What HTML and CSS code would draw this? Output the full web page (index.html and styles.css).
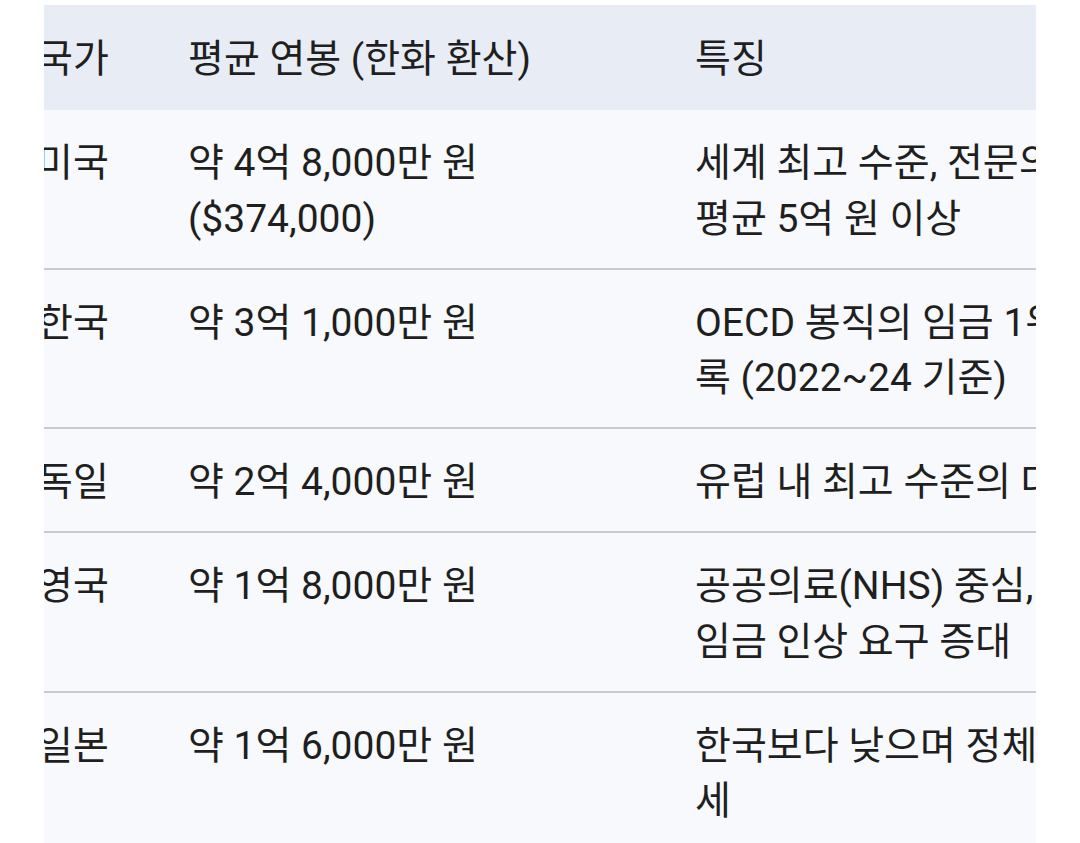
FILE: index.html
```html
<!DOCTYPE html>
<html lang="ko">
<head>
<meta charset="utf-8">
<title>국가별 의사 평균 연봉</title>
<link rel="stylesheet" href="styles.css">
</head>
<body>
<div class="scroller">
  <table class="salary">
    <thead>
      <tr>
        <th class="c-country">국가</th>
        <th class="c-pay">평균 연봉 (한화 환산)</th>
        <th class="c-note">특징</th>
      </tr>
    </thead>
    <tbody>
      <tr>
        <td>미국</td>
        <td>약 4억 8,000만 원 ($374,000)</td>
        <td>세계 최고 수준, 전문의는 평균 5억 원 이상</td>
      </tr>
      <tr>
        <td>한국</td>
        <td>약 3억 1,000만 원</td>
        <td>OECD 봉직의 임금 1위 기록 (2022~24 기준)</td>
      </tr>
      <tr>
        <td>독일</td>
        <td>약 2억 4,000만 원</td>
        <td>유럽 내 최고 수준의 대우</td>
      </tr>
      <tr>
        <td>영국</td>
        <td>약 1억 8,000만 원</td>
        <td>공공의료(NHS) 중심, 최근 임금 인상 요구 증대</td>
      </tr>
      <tr>
        <td>일본</td>
        <td>약 1억 6,000만 원</td>
        <td>한국보다 낮으며 정체 추세</td>
      </tr>
    </tbody>
  </table>
</div>
</body>
</html>
```

FILE: styles.css
```css
html, body {
  margin: 0;
  padding: 0;
  background: #ffffff;
}

body {
  font-family: "Roboto", "Noto Sans CJK KR", sans-serif;
  color: #1f1f1f;
}

.scroller {
  margin: 5px 0 0 44px;
  width: 992px;
  height: 838px;
  overflow: hidden;
  background: #f7f9fc;
}

.salary {
  border-collapse: collapse;
  margin-left: -31px;
  font-size: 39px;
  line-height: 55.5px;
  table-layout: fixed;
  width: 1102px;
}

.salary th,
.salary td {
  text-align: left;
  vertical-align: top;
  font-weight: 400;
  padding: 26px 0 20.5px 24px;
}

.salary thead th {
  background: #e8edf5;
  padding-top: 27px;
  padding-bottom: 22.5px;
}

.salary tbody td {
  background: #f7f9fc;
  border-bottom: 2px solid #c9cbcf;
}

.c-country { width: 127px; }
.c-pay { width: 483px; }
.c-note { width: 420px; }
```
